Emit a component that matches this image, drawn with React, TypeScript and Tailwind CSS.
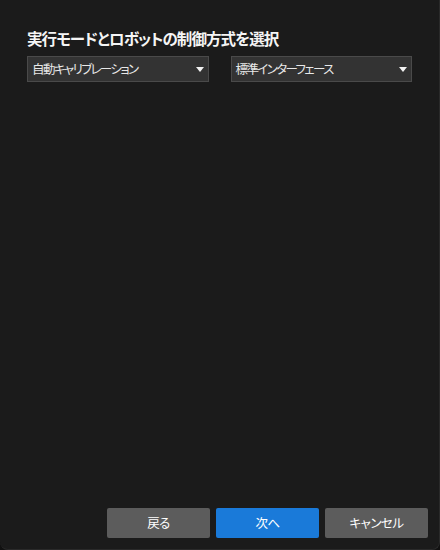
const jp = "font-['Yu_Gothic_UI','Noto_Sans_CJK_JP',sans-serif] [font-feature-settings:'palt']"

function Caret() {
  return (
    <svg width="8" height="5" viewBox="0 0 8 5" className="shrink-0">
      <path d="M0 0h8L4 5z" fill="#f2f2f2" />
    </svg>
  )
}

function Select({ label }: { label: string }) {
  return (
    <div className="flex h-[26px] w-[182px] items-center justify-between border border-[#4a4a4a] bg-[#333333] pl-[4px] pr-[4px]">
      <span className="text-[12.5px] leading-none tracking-[-1.6px] text-[#e8e8e8]">{label}</span>
      <Caret />
    </div>
  )
}

function Button({ label, primary }: { label: string; primary?: boolean }) {
  return (
    <button
      className={
        primary
          ? "flex h-[30px] w-[103px] items-center justify-center rounded-[2px] bg-[#1a7ad9] text-[12.5px] tracking-[-0.5px] text-white"
          : "flex h-[30px] w-[103px] items-center justify-center rounded-[2px] bg-[#5c5c5c] text-[12.5px] tracking-[-0.5px] text-white"
      }
    >
      {label}
    </button>
  )
}

export default function App() {
  return (
    <div className="h-[550px] w-[440px] bg-[#111111]">
      <div className={`flex h-full w-full flex-col overflow-hidden rounded-b-[8px] border-r border-b border-[#2a2a2a] bg-[#1b1b1b] ${jp}`}>
        <div className="px-[27px] pt-[28px]">
          <h1 className="text-[15.5px] font-bold leading-[20px] tracking-[-0.9px] text-[#f5f5f5]">実行モードとロボットの制御方式を選択</h1>
          <div className="mt-[8px] flex gap-[22px]">
            <Select label="自動キャリブレーション" />
            <Select label="標準インターフェース" />
          </div>
        </div>

        <div className="flex-1" />

        <div className="flex justify-end gap-[6px] pb-[11px] pr-[11px]">
          <Button label="戻る" />
          <Button label="次へ" primary />
          <Button label="キャンセル" />
        </div>
      </div>
    </div>
  )
}
